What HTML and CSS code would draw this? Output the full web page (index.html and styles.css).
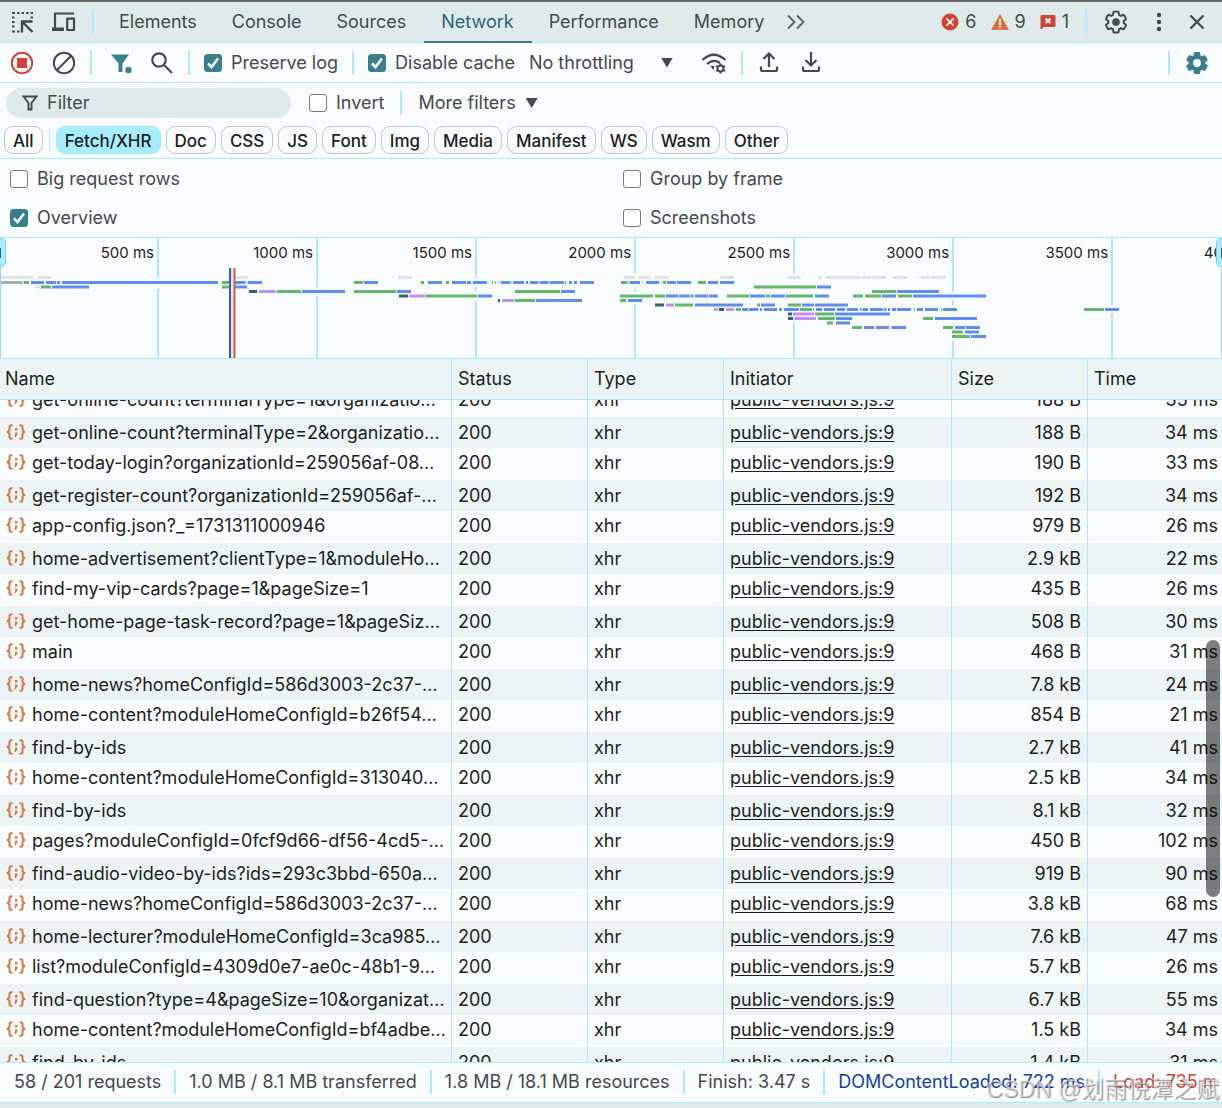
FILE: index.html
```html
<!DOCTYPE html>
<html lang="en">
<head>
<meta charset="utf-8">
<title>DevTools - Network</title>
<link rel="stylesheet" href="styles.css">
</head>
<body>
<svg class="sprite" aria-hidden="true">
  <symbol id="i-json" viewBox="0 0 20 16">
    <path d="M6.500 1.200H5.500Q3.500 1.200 3.500 3V5.400Q3.500 7.500 1 8Q3.500 8.500 3.500 10.600V13Q3.500 14.800 5.500 14.800H6.500M13.500 1.200H14.500Q16.500 1.200 16.500 3V5.400Q16.500 7.500 19 8Q16.500 8.500 16.500 10.600V13Q16.500 14.800 14.500 14.800H13.500" fill="none" stroke="currentColor" stroke-width="2"/>
    <path d="M9 4h2.400v2.400H9zM9 8.500h2.400v2L9.800 13H8.400L9 10.800z" fill="currentColor"/>
  </symbol>
  <symbol id="i-gear" viewBox="0 0 24 24">
    <path d="M19.140 12.940c.04-.3.06-.61.06-.94 0-.32-.02-.64-.07-.94l2.030-1.580c.18-.14.23-.41.12-.61l-1.920-3.320c-.12-.22-.37-.29-.59-.22l-2.390.96c-.5-.38-1.030-.7-1.620-.94l-.36-2.540c-.04-.24-.24-.41-.48-.41h-3.840c-.24 0-.43.17-.47.41l-.36 2.540c-.59.24-1.130.57-1.620.94l-2.390-.96c-.22-.08-.47 0-.59.22L2.740 8.870c-.12.21-.08.47.12.61l2.030 1.580c-.05.3-.09.63-.09.94s.02.64.07.94l-2.030 1.580c-.18.14-.23.41-.12.61l1.920 3.320c.12.22.37.29.59.22l2.390-.96c.5.38 1.030.7 1.620.94l.36 2.540c.05.24.24.41.48.41h3.840c.24 0 .44-.17.47-.41l.36-2.540c.59-.24 1.130-.56 1.620-.94l2.390.96c.22.08.47 0 .59-.22l1.920-3.320c.12-.22.07-.47-.12-.61z"/>
  </symbol>
</svg>

<div class="devtools">
  <header class="bar tabbar">
    <button class="icon" aria-label="Inspect element"><svg width="24" height="24" viewBox="0 0 24 24"><path d="M2 3h3M7 3h2.500M11.500 3H14M16 3h2.500M20.500 3H23M2 7.500h2.500M2 12h2.500M2 16.500h2.500M2 21.500h3M7 21.500h2.500M20.500 7.500H23" fill="none" stroke="currentColor" stroke-width="2.200"/><path d="M12 22.500V11.500H22.500M12.500 12L22.500 22" fill="none" stroke="currentColor" stroke-width="2.400"/></svg></button>
    <button class="icon" aria-label="Toggle device toolbar"><svg width="26" height="22" viewBox="0 0 26 22"><path d="M5 18V2.500H24" fill="none" stroke="currentColor" stroke-width="2.200"/><path d="M2 16.500h12v3.500H2z" fill="currentColor"/><path d="M17.200 7.600H24V19H17.200Z" fill="none" stroke="currentColor" stroke-width="2.200" stroke-linejoin="round"/></svg></button>
    <span class="sep"></span>
    <nav class="tabs">
      <button class="tab">Elements</button>
      <button class="tab">Console</button>
      <button class="tab">Sources</button>
      <button class="tab active">Network</button>
      <button class="tab">Performance</button>
      <button class="tab">Memory</button>
    </nav>
    <button class="icon more" aria-label="More tabs"><svg width="20" height="16" viewBox="0 0 20 16"><path d="M2 1.500L8.500 8L2 14.500M11 1.500L17.500 8L11 14.500" fill="none" stroke="#5d6666" stroke-width="2"/></svg></button>
    <div class="issues">
      <button class="issue"><svg width="18" height="18" viewBox="0 0 18 18"><circle cx="9" cy="9" r="8.500" fill="#d04437"/><path d="M5.500 5.500L12.500 12.500M12.500 5.500L5.500 12.500" stroke="#fff" stroke-width="1.700"/></svg>6</button>
      <button class="issue"><svg width="18" height="18" viewBox="0 0 18 18"><path d="M9 1L18 17H0Z" fill="#dc7440"/><path d="M9 6v6M9 13.300v2" stroke="#fff" stroke-width="1.800"/></svg>9</button>
      <button class="issue"><svg width="16" height="16" viewBox="0 0 16 16"><path d="M1.500 1h13q1 0 1 1v10q0 1-1 1H4L.5 15.500V2q0-1 1-1z" fill="#d04437"/><path d="M5.500 4.500L10.500 9M10.500 4.500L5.500 9" stroke="#fff" stroke-width="1.700"/></svg>1</button>
    </div>
    <span class="sep"></span>
    <div class="window-tools">
      <button class="icon" aria-label="Settings"><svg width="26" height="26" viewBox="0 0 24 24"><use href="#i-gear" fill="none" stroke="currentColor" stroke-width="1.800"/><circle cx="12" cy="12" r="3.500" fill="currentColor"/></svg></button>
      <button class="icon" aria-label="Customize"><svg width="6" height="20" viewBox="0 0 6 20"><g fill="currentColor"><circle cx="3" cy="3" r="2.200"/><circle cx="3" cy="10" r="2.200"/><circle cx="3" cy="17" r="2.200"/></g></svg></button>
      <button class="icon" aria-label="Close"><svg width="16" height="16" viewBox="0 0 16 16"><path d="M1.500 1.500L14.500 14.500M14.500 1.500L1.500 14.500" stroke="currentColor" stroke-width="2.300"/></svg></button>
    </div>
  </header>

  <div class="bar toolbar">
    <div class="tools">
      <button class="icon" aria-label="Stop recording"><svg width="24" height="24" viewBox="0 0 24 24" fill="#d04437"><circle cx="12" cy="12" r="10.200" fill="none" stroke="#d04437" stroke-width="2"/><path d="M7 7h10v10H7z"/></svg></button>
      <button class="icon" aria-label="Clear"><svg width="24" height="24" viewBox="0 0 24 24" fill="none" stroke="currentColor" stroke-width="2"><circle cx="12" cy="12" r="10.200"/><path d="M4.800 19.200L19.200 4.800"/></svg></button>
    </div>
    <span class="sep"></span>
    <div class="tools find">
      <button class="icon" aria-label="Filter"><svg width="22" height="24" viewBox="0 0 22 24" fill="#3a7f8d"><path d="M1 3.500H19L12.500 12.500V21H8.500V12.500Z"/><circle cx="18.500" cy="19" r="3.200"/></svg></button>
      <button class="icon" aria-label="Search"><svg width="24" height="24" viewBox="0 0 24 24" fill="none" stroke="currentColor" stroke-width="2.200"><circle cx="9" cy="9" r="6.700"/><path d="M14 14L22 22"/></svg></button>
    </div>
    <span class="sep"></span>
    <label class="check"><input type="checkbox" checked>Preserve log</label>
    <span class="sep"></span>
    <label class="check"><input type="checkbox" checked>Disable cache</label>
    <span class="throttle"><select aria-label="Throttling"><option>No throttling</option></select><span class="caret"></span></span>
    <button class="icon conditions" aria-label="Network conditions"><svg width="26" height="22" viewBox="0 0 26 22"><path d="M1.500 8Q12.500-2.500 24.500 8M6 12Q12.500 6.300 19 11" fill="none" stroke="currentColor" stroke-width="2.300"/><path d="M9.500 14.500q2-1 4-.5l-1 4z" fill="currentColor"/><circle cx="19.500" cy="16.500" r="3" fill="none" stroke="currentColor" stroke-width="2"/><path d="M19.500 11.500v2M19.500 19.500v2M15 14l1.800 1M22.200 18l1.800 1M15 19l1.800-1M22.200 15l1.800-1" stroke="currentColor" stroke-width="2"/></svg></button>
    <span class="sep"></span>
    <div class="tools transfer">
      <button class="icon" aria-label="Import"><svg width="20" height="22" viewBox="0 0 20 22" fill="none" stroke="currentColor" stroke-width="2.200"><path d="M10 15V2M4.500 7L10 1.500L15.500 7M2 14.500V17.500Q2 19 3.500 19H16.500Q18 19 18 17.500V14.500"/></svg></button>
      <button class="icon" aria-label="Export"><svg width="20" height="22" viewBox="0 0 20 22" fill="none" stroke="currentColor" stroke-width="2.200"><path d="M10 0V13M4.500 8L10 13.500L15.500 8M2 14.500V17.500Q2 19 3.500 19H16.500Q18 19 18 17.500V14.500"/></svg></button>
    </div>
    <span class="sep last"></span>
    <button class="icon" aria-label="Network settings"><svg width="26" height="26" viewBox="0 0 24 24"><use href="#i-gear" fill="#3a7f8d" stroke="#3a7f8d" stroke-width="1"/><circle cx="12" cy="12" r="3.600" fill="#f9fdfe"/></svg></button>
  </div>

  <section class="filters">
    <div class="filter-row">
      <label class="search"><svg width="16" height="16" viewBox="0 0 16 16"><path d="M1.500 1.500H14.500L9.500 8V14.500H6.500V8Z" fill="none" stroke="currentColor" stroke-width="1.900"/></svg><input type="text" placeholder="Filter" aria-label="Filter"></label>
      <label class="check"><input type="checkbox">Invert</label>
      <span class="sep"></span>
      <button class="menu">More filters<span class="caret"></span></button>
    </div>
    <div class="chips">
      <button class="chip">All</button>
      <span class="sep"></span>
      <button class="chip on">Fetch/XHR</button>
      <button class="chip">Doc</button>
      <button class="chip">CSS</button>
      <button class="chip">JS</button>
      <button class="chip">Font</button>
      <button class="chip">Img</button>
      <button class="chip">Media</button>
      <button class="chip">Manifest</button>
      <button class="chip">WS</button>
      <button class="chip">Wasm</button>
      <button class="chip">Other</button>
    </div>
  </section>

  <section class="options">
    <label class="check"><input type="checkbox">Big request rows</label>
    <label class="check"><input type="checkbox">Group by frame</label>
    <label class="check"><input type="checkbox" checked>Overview</label>
    <label class="check"><input type="checkbox">Screenshots</label>
  </section>

  <section class="overview">
    <div class="ruler">
      <span>500 ms</span><span>1000 ms</span><span>1500 ms</span><span>2000 ms</span><span>2500 ms</span><span>3000 ms</span><span>3500 ms</span><span>4000 ms</span>
    </div>
    <svg class="chart" viewBox="0 0 1222 120" preserveAspectRatio="none" fill="none" stroke-width="3">
      <!-- gaps in the grid behind request bars -->
      <path stroke="#f9fdfe" stroke-width="8" d="M155 44.500H161M155 47H161M314 53.500H320M473 44.500H479M473 58H479M632 40H638M632 45H638M632 58H638M632 62.500H638M791 40H797M791 49H797M791 58H797M791 67H797M791 71.500H797M791 76H797M791 80.500H797M950 58H956M950 71.500H956M950 80.500H956M950 89.500H956M950 94H956M950 98.500H956M1109 71.500H1115"/>
      <path stroke="#dee5e5" d="M1 39.500H33M38 39.500H51M235 39.500H248M398 39.500H412M624 39.500H635M638 39.500H651M655 39.500H669M720 39.500H734M787 39.500H801M818 39.500H822M826 39.500H861M862 39.500H871M872 39.500H886M893 39.500H907M918 39.500H919M921 39.500H929M930 39.500H931M932 39.500H946M35 49H40"/>
      <path stroke="#abb0b0" d="M1 44.500H23M714 71.500H718"/>
      <path stroke="#b9cbfa" d="M245 44.500H247M498 44.500H500M510 44.500H512M538 44.500H540M548 44.500H550M627 44.500H630M642 44.500H643M661 44.500H662M692 58H694M758 71.500H759M861 71.500H863M886 71.500H887M891 89.500H892"/>
      <path stroke="#64b868" d="M24 44.500H29M222 44.500H234M354 44.500H363M421 44.500H424M446 44.500H449M492 44.500H493M495 44.500H496M565 44.500H566M621 44.500H627M663 44.500H666M698 44.500H706M41 49H51M222 49H233M754 49H816M277 53.500H301M354 53.500H396M515 53.500H560M872 53.500H896M426 58H477M620 58H653M655 58H665M727 58H749M766 58H770M786 58H813M853 58H863M865 58H881M898 58H912M515 62.500H535M620 62.500H626M675 67H693M757 67H760M788 67H801M736 71.500H741M779 71.500H782M800 71.500H812M914 71.500H915M941 71.500H942M1084 71.500H1104M815 76H834M818 80.500H835M923 80.500H933M827 85H833M852 89.500H862M943 89.500H953M952 94H963M952 98.500H970"/>
      <path stroke="#5f8df0" d="M31 44.500H44M46 44.500H56M57 44.500H60M62 44.500H218M235 44.500H245M248 44.500H262M364 44.500H378M428 44.500H442M452 44.500H466M467 44.500H471M473 44.500H487M501 44.500H510M513 44.500H524M526 44.500H528M530 44.500H538M540 44.500H548M550 44.500H564M569 44.500H572M574 44.500H577M580 44.500H594M630 44.500H640M646 44.500H659M667 44.500H676M677 44.500H691M708 44.500H718M720 44.500H734M52 49H89M234 49H247M817 49H831M302 53.500H345M397 53.500H411M561 53.500H575M897 53.500H939M478 58H492M666 58H678M679 58H690M691 58H693M695 58H708M709 58H718M750 58H765M771 58H785M815 58H829M882 58H896M913 58H986M536 62.500H582M628 62.500H642M695 67H743M761 67H775M802 67H814M815 67H848M742 71.500H748M749 71.500H758M760 71.500H762M764 71.500H777M784 71.500H799M813 71.500H814M816 71.500H822M824 71.500H835M837 71.500H845M847 71.500H858M860 71.500H861M863 71.500H868M870 71.500H883M884 71.500H886M888 71.500H890M892 71.500H896M897 71.500H911M917 71.500H923M925 71.500H938M943 71.500H957M1105 71.500H1119M835 76H890M836 80.500H852M935 80.500H977M836 85H850M864 89.500H874M876 89.500H889M892 89.500H906M955 89.500H965M966 89.500H980M965 94H979M971 98.500H986"/>
      <path stroke="#2d6472" d="M249 53.500H257M399 58H408M498 62.500H500M655 67H664M719 71.500H724M788 76H792M788 80.500H793"/>
      <path stroke="#c58df6" d="M259 53.500H276M409 58H425M502 62.500H514M666 67H674M726 71.500H734M793 76H814M794 80.500H816"/>
      <path stroke="#dde6f4" d="M232.500 30V120"/>
      <path stroke="#3e5da8" stroke-width="2" d="M230 30V120"/>
      <path stroke="#d85a48" stroke-width="2" d="M234.500 30V120"/>
      <path stroke="#9adcec" stroke-width="1" d="M.5 0V120M1221.500 0V120"/>
    </svg>
    <span class="handle left"></span>
    <span class="handle right"></span>
  </section>

  <main class="grid">
    <div class="scroller" id="requests">
      <table>
        <colgroup><col><col class="c-status"><col class="c-type"><col class="c-init"><col class="c-size"><col class="c-time"></colgroup>
        <thead><tr><th>Name</th><th>Status</th><th>Type</th><th>Initiator</th><th>Size</th><th>Time</th></tr></thead>
        <tbody>
          <tr><td><svg class="json"><use href="#i-json"/></svg>get-online-count?terminalType=1&amp;organizatio…</td><td>200</td><td>xhr</td><td><a href="#">public-vendors.js:9</a></td><td>188 B</td><td>35 ms</td></tr>
          <tr><td><svg class="json"><use href="#i-json"/></svg>get-online-count?terminalType=2&amp;organizatio…</td><td>200</td><td>xhr</td><td><a href="#">public-vendors.js:9</a></td><td>188 B</td><td>34 ms</td></tr>
          <tr><td><svg class="json"><use href="#i-json"/></svg>get-today-login?organizationId=259056af-08…</td><td>200</td><td>xhr</td><td><a href="#">public-vendors.js:9</a></td><td>190 B</td><td>33 ms</td></tr>
          <tr><td><svg class="json"><use href="#i-json"/></svg>get-register-count?organizationId=259056af-…</td><td>200</td><td>xhr</td><td><a href="#">public-vendors.js:9</a></td><td>192 B</td><td>34 ms</td></tr>
          <tr><td><svg class="json"><use href="#i-json"/></svg>app-config.json?_=1731311000946</td><td>200</td><td>xhr</td><td><a href="#">public-vendors.js:9</a></td><td>979 B</td><td>26 ms</td></tr>
          <tr><td><svg class="json"><use href="#i-json"/></svg>home-advertisement?clientType=1&amp;moduleHo…</td><td>200</td><td>xhr</td><td><a href="#">public-vendors.js:9</a></td><td>2.9 kB</td><td>22 ms</td></tr>
          <tr><td><svg class="json"><use href="#i-json"/></svg>find-my-vip-cards?page=1&amp;pageSize=1</td><td>200</td><td>xhr</td><td><a href="#">public-vendors.js:9</a></td><td>435 B</td><td>26 ms</td></tr>
          <tr><td><svg class="json"><use href="#i-json"/></svg>get-home-page-task-record?page=1&amp;pageSiz…</td><td>200</td><td>xhr</td><td><a href="#">public-vendors.js:9</a></td><td>508 B</td><td>30 ms</td></tr>
          <tr><td><svg class="json"><use href="#i-json"/></svg>main</td><td>200</td><td>xhr</td><td><a href="#">public-vendors.js:9</a></td><td>468 B</td><td>31 ms</td></tr>
          <tr><td><svg class="json"><use href="#i-json"/></svg>home-news?homeConfigId=586d3003-2c37-…</td><td>200</td><td>xhr</td><td><a href="#">public-vendors.js:9</a></td><td>7.8 kB</td><td>24 ms</td></tr>
          <tr><td><svg class="json"><use href="#i-json"/></svg>home-content?moduleHomeConfigId=b26f54…</td><td>200</td><td>xhr</td><td><a href="#">public-vendors.js:9</a></td><td>854 B</td><td>21 ms</td></tr>
          <tr><td><svg class="json"><use href="#i-json"/></svg>find-by-ids</td><td>200</td><td>xhr</td><td><a href="#">public-vendors.js:9</a></td><td>2.7 kB</td><td>41 ms</td></tr>
          <tr><td><svg class="json"><use href="#i-json"/></svg>home-content?moduleHomeConfigId=313040…</td><td>200</td><td>xhr</td><td><a href="#">public-vendors.js:9</a></td><td>2.5 kB</td><td>34 ms</td></tr>
          <tr><td><svg class="json"><use href="#i-json"/></svg>find-by-ids</td><td>200</td><td>xhr</td><td><a href="#">public-vendors.js:9</a></td><td>8.1 kB</td><td>32 ms</td></tr>
          <tr><td><svg class="json"><use href="#i-json"/></svg>pages?moduleConfigId=0fcf9d66-df56-4cd5-…</td><td>200</td><td>xhr</td><td><a href="#">public-vendors.js:9</a></td><td>450 B</td><td>102 ms</td></tr>
          <tr><td><svg class="json"><use href="#i-json"/></svg>find-audio-video-by-ids?ids=293c3bbd-650a…</td><td>200</td><td>xhr</td><td><a href="#">public-vendors.js:9</a></td><td>919 B</td><td>90 ms</td></tr>
          <tr><td><svg class="json"><use href="#i-json"/></svg>home-news?homeConfigId=586d3003-2c37-…</td><td>200</td><td>xhr</td><td><a href="#">public-vendors.js:9</a></td><td>3.8 kB</td><td>68 ms</td></tr>
          <tr><td><svg class="json"><use href="#i-json"/></svg>home-lecturer?moduleHomeConfigId=3ca985…</td><td>200</td><td>xhr</td><td><a href="#">public-vendors.js:9</a></td><td>7.6 kB</td><td>47 ms</td></tr>
          <tr><td><svg class="json"><use href="#i-json"/></svg>list?moduleConfigId=4309d0e7-ae0c-48b1-9…</td><td>200</td><td>xhr</td><td><a href="#">public-vendors.js:9</a></td><td>5.7 kB</td><td>26 ms</td></tr>
          <tr><td><svg class="json"><use href="#i-json"/></svg>find-question?type=4&amp;pageSize=10&amp;organizat…</td><td>200</td><td>xhr</td><td><a href="#">public-vendors.js:9</a></td><td>6.7 kB</td><td>55 ms</td></tr>
          <tr><td><svg class="json"><use href="#i-json"/></svg>home-content?moduleHomeConfigId=bf4adbe…</td><td>200</td><td>xhr</td><td><a href="#">public-vendors.js:9</a></td><td>1.5 kB</td><td>34 ms</td></tr>
          <tr><td><svg class="json"><use href="#i-json"/></svg>find-by-ids</td><td>200</td><td>xhr</td><td><a href="#">public-vendors.js:9</a></td><td>1.4 kB</td><td>31 ms</td></tr>
        </tbody>
      </table>
    </div>
    <span class="thumb"></span>
  </main>

  <footer class="status">
    <span>58 / 201 requests</span><i class="sep"></i>
    <span>1.0 MB / 8.1 MB transferred</span><i class="sep"></i>
    <span>1.8 MB / 18.1 MB resources</span><i class="sep"></i>
    <span>Finish: 3.47 s</span><i class="sep"></i>
    <span class="dcl">DOMContentLoaded: 722 ms</span><i class="sep"></i>
    <span class="load">Load: 735 ms</span>
  </footer>
  <div class="watermark">CSDN @划雨悦潭之赋</div>
</div>
<script src="main.js"></script>
</body>
</html>
```
FILE: main.js
```js
// Open the request list part of the way into its first row.
document.getElementById('requests').scrollTop = 15;
```
FILE: styles.css
```css
:root {
  --bg: #f9fdfe;
  --tint: #dfebeb;
  --stripe: #edf4f6;
  --line: #aaecfd;
  --teal: #3a7f8d;
  --ink: #1b1f20;
  --soft: #444a4b;
}
* { box-sizing: border-box; }
body {
  margin: 0;
  font: 18px/24px Inter, "Liberation Sans", sans-serif;
  color: var(--soft);
  background: var(--tint);
}
button, input, select { font: inherit; color: inherit; }
button { border: 0; background: none; padding: 0; }
svg { display: block; flex: none; }
.sprite { position: absolute; width: 0; height: 0; }

.devtools {
  position: relative;
  display: flex;
  flex-direction: column;
  height: 100vh;
  padding-bottom: 5px;
  border-top: 2px solid #666;
  background: var(--tint);
  overflow: hidden;
}
.sep { flex: none; width: 2px; height: 24px; background: var(--line); }

.bar {
  display: flex;
  align-items: center;
  flex: none;
  border-bottom: 1px solid var(--line);
  padding: 0 12px 0 10px;
}
.tabbar { height: 41px; background: var(--tint); gap: 16px; padding-right: 17px; }
.tabs { display: flex; align-self: stretch; margin-bottom: -1px; margin-left: -9px; }
.tab { padding: 0 18px 0 17px; border-bottom: 2px solid transparent; border-top: 1px solid transparent; }
.tab:first-child { padding-left: 18px; }
.tab.active { color: #2b6775; border-bottom-color: var(--teal); }
.more { margin-left: -12px; }
.issues { display: flex; gap: 14px; margin-left: auto; }
.issue { display: flex; align-items: center; gap: 6px; }
.window-tools { display: flex; align-items: center; gap: 27px; }

.toolbar { height: 40px; background: var(--bg); gap: 14px; }
.toolbar .last { margin-left: auto; }
.tools { display: flex; align-items: center; gap: 18px; }
.tools.find { margin-left: 4px; }
.tools.transfer { gap: 22px; margin-left: 2px; }
.throttle { display: flex; align-items: center; }
.throttle select { appearance: none; border: 0; background: none; padding: 0; width: 132px; }
.conditions { margin-left: 14px; }
.caret { width: 12px; height: 10px; background: currentColor; clip-path: polygon(0 0, 100% 0, 50% 100%); }

.check { display: flex; align-items: center; gap: 9px; }
.check input {
  appearance: none;
  flex: none;
  width: 18px;
  height: 18px;
  margin: 0;
  border: 1px solid #757b7b;
  border-radius: 3px;
  background: #fff;
}
.check input:checked {
  border-color: var(--teal);
  background: var(--teal) url("data:image/svg+xml,%3Csvg xmlns='http://www.w3.org/2000/svg' viewBox='0 0 16 16'%3E%3Cpath d='M3 8.500L6.500 12L13 3.500' fill='none' stroke='%23fff' stroke-width='2.500'/%3E%3C/svg%3E");
}

.filters {
  flex: none;
  padding: 5px 6px 4px;
  background: var(--bg);
  border-bottom: 1px solid var(--line);
}
.filter-row { display: flex; align-items: center; gap: 16px; }
.search {
  display: flex;
  align-items: center;
  gap: 9px;
  width: 285px;
  height: 30px;
  padding: 0 16px;
  border-radius: 15px;
  background: var(--tint);
}
.search input { flex: 1; min-width: 0; border: 0; padding: 0; background: none; outline: 0; }
.search input::placeholder { color: var(--soft); opacity: 1; }
.filter-row .check { margin-left: 2px; }
.menu { display: flex; align-items: center; gap: 10px; }
.chips { display: flex; align-items: center; gap: 5px; margin: 8px 0 0 -2px; }
.chip {
  height: 28px;
  padding: 1px 8px 0;
  border: 1px solid #c0c8c9;
  border-radius: 9px;
  font-size: 17px;
  font-weight: 500;
  color: var(--ink);
}
.chip.on { background: #a8edff; border-color: #a8edff; }
.chips .sep { width: 1px; margin: 0 1px; }

.options {
  flex: none;
  display: grid;
  grid-template-columns: 1fr 1fr;
  grid-auto-rows: 39px;
  padding-left: 10px;
  column-gap: 14px;
  background: var(--bg);
  border-bottom: 1px solid var(--line);
}

.overview { position: relative; flex: none; height: 121px; background: var(--bg); border-bottom: 1px solid var(--line); overflow: hidden; }
.ruler { display: grid; grid-template-columns: repeat(8, 1fr); width: 104.1%; height: 100%; }
.ruler span {
  padding: 3px 3px 0 0;
  border-right: 2px solid var(--line);
  text-align: right;
  font-size: 15px;
  color: var(--ink);
}
.chart { position: absolute; top: 0; left: 0; width: 100%; height: 120px; }
.handle {
  position: absolute;
  top: 0;
  width: 6px;
  height: 29px;
  border: 1px solid #86cfe0;
  background: #a8edff linear-gradient(#35606c, #35606c) no-repeat;
  background-size: 1px 10px;
}
.handle.left { left: 0; border-left: 0; border-radius: 0 5px 5px 0; background-position: 0 9px; }
.handle.right { right: 0; border-right: 0; border-radius: 5px 0 0 5px; background-position: 100% 9px; }

.grid { position: relative; flex: 1; min-height: 0; background: var(--bg); }
.scroller { height: 100%; overflow: auto; scrollbar-width: none; }
table { width: 100%; table-layout: fixed; border-collapse: separate; border-spacing: 0; color: var(--ink); }
.c-status, .c-type, .c-size { width: 136px; }
.c-init { width: 228px; }
.c-time { width: 135px; }
th {
  position: sticky;
  top: 0;
  height: 41px;
  padding: 0 5px;
  background: var(--stripe);
  border-bottom: 1px solid var(--line);
  text-align: left;
  font-weight: 400;
}
td { height: 32px; padding: 0 6px 2px; white-space: nowrap; overflow: hidden; line-height: 30px; }
th + th, td + td { border-left: 1px solid var(--line); }
th + th { padding-left: 6px; }
td:first-child { padding-right: 0; }
td:nth-child(5), td:nth-child(6) { text-align: right; }
td:nth-child(6) { padding-right: 4px; }
tr:nth-child(even) td { height: 31px; padding-top: 1px; padding-bottom: 0; background: var(--stripe); }
.json { display: inline-block; width: 20px; height: 16px; margin-right: 6px; vertical-align: -1px; color: #d97742; }
td a { color: inherit; text-underline-offset: 2px; }
.thumb {
  position: absolute;
  right: 2px;
  top: 40%;
  width: 14px;
  height: 257px;
  border-radius: 7px;
  background: rgba(0, 0, 0, 0.5);
}

.status {
  flex: none;
  display: flex;
  align-items: center;
  gap: 13px;
  height: 41px;
  padding: 0 7px 2px 14px;
  border-top: 1px solid var(--line);
  border-bottom: 1px solid var(--line);
  background: var(--bg);
  white-space: nowrap;
}
.status span { flex: none; }
.dcl { color: #1a3f9c; }
.status .load { flex: 0 1 auto; min-width: 0; overflow: hidden; color: #d04437; }
.watermark {
  position: absolute;
  right: 3px;
  bottom: 2px;
  font: 23px/34px "Liberation Sans", "Noto Sans CJK SC", sans-serif;
  color: rgba(255, 255, 255, 0.5);
  text-shadow: 1px 1px 1px rgba(90, 90, 90, 0.7);
}
```
